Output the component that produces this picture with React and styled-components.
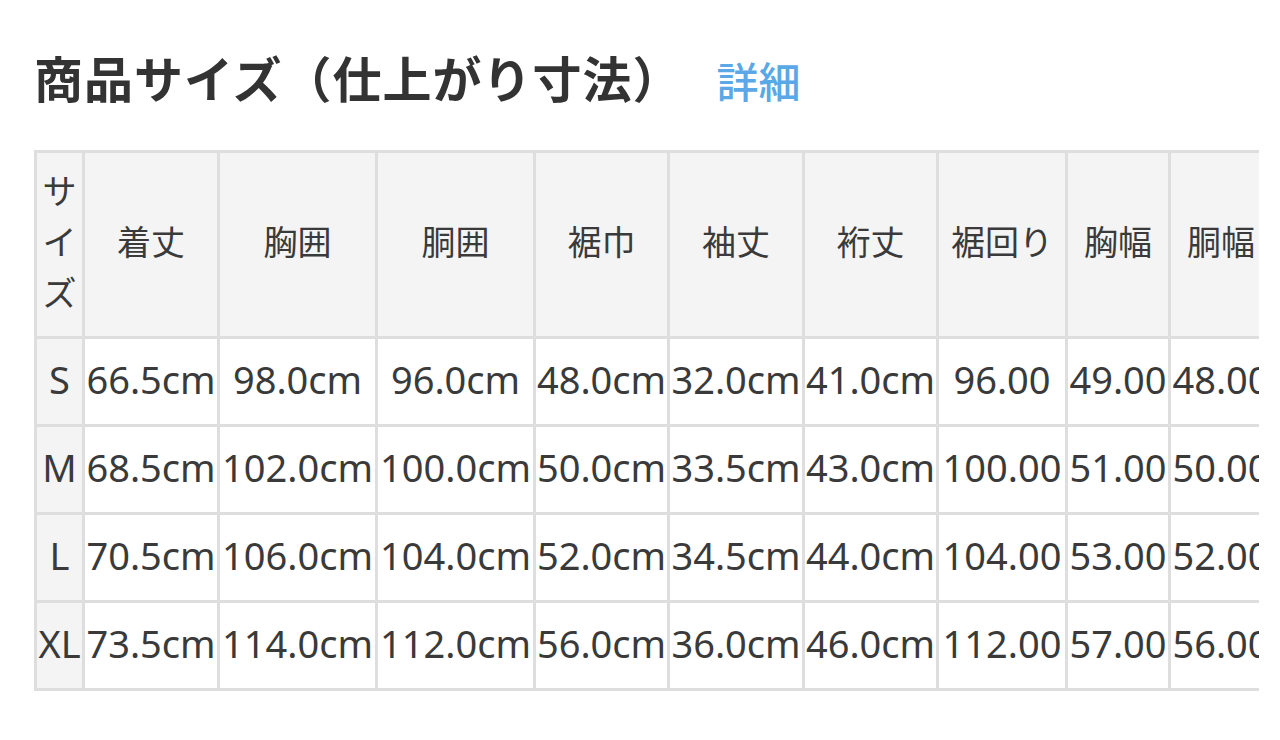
import React from "react";
import styled, { createGlobalStyle } from "styled-components";

const GlobalStyle = createGlobalStyle`
  html, body {
    margin: 0;
    padding: 0;
    background: #ffffff;
  }
  body {
    font-family: "Noto Sans CJK JP", "Noto Sans", sans-serif;
    color: #333333;
  }
`;

const Page = styled.div`
  padding: 53px 0 0 34px;
  width: 1280px;
  height: 740px;
  box-sizing: border-box;
  overflow: hidden;
`;

const TitleRow = styled.div`
  display: flex;
  align-items: baseline;
  height: 48px;
  margin-bottom: 49px;
`;

const Title = styled.h2`
  margin: 0;
  font-family: "Noto Sans CJK JP", sans-serif;
  font-weight: 700;
  font-size: 49px;
  line-height: 48px;
  letter-spacing: 1px;
  color: #333333;
  white-space: nowrap;
`;

const DetailLink = styled.a`
  margin-left: 34px;
  font-family: "Noto Sans CJK JP", sans-serif;
  font-weight: 500;
  font-size: 42px;
  line-height: 48px;
  color: #5ba8e6;
  text-decoration: none;
  cursor: pointer;
`;

const TableClip = styled.div`
  width: 1225px;
  overflow: hidden;
`;

const Grid = styled.div`
  display: inline-grid;
  grid-template-columns: ${(p) => p.$cols.map((c) => `${c}px`).join(" ")};
  grid-template-rows: 183px repeat(4, 85px);
  gap: 3px;
  padding: 3px;
  background: #dedede;
`;

const Cell = styled.div`
  display: flex;
  align-items: center;
  justify-content: center;
  text-align: center;
  background: ${(p) => (p.$shade ? "#f4f4f4" : "#ffffff")};
  color: #333333;
  min-width: 0;
`;

const HeadCell = styled(Cell)`
  padding-bottom: 8px;
  font-family: "Noto Sans CJK JP", sans-serif;
  font-size: 34px;
  line-height: 1.5;
  color: #3a3a3a;
  white-space: ${(p) => (p.$wrap ? "normal" : "nowrap")};
  word-break: break-all;
`;

const DataCell = styled(Cell)`
  padding-bottom: 5px;
  font-family: "Noto Sans", "Noto Sans CJK JP", sans-serif;
  font-size: 38px;
  line-height: 1;
  color: #3a3a3a;
  white-space: nowrap;
`;

const cols = [45, 132, 155, 155, 131, 132, 131, 126, 100, 100];

const headers = ["着丈", "胸囲", "胴囲", "裾巾", "袖丈", "裄丈", "裾回り", "胸幅", "胴幅"];

const rows = [
  ["S", "66.5cm", "98.0cm", "96.0cm", "48.0cm", "32.0cm", "41.0cm", "96.00", "49.00", "48.00"],
  ["M", "68.5cm", "102.0cm", "100.0cm", "50.0cm", "33.5cm", "43.0cm", "100.00", "51.00", "50.00"],
  ["L", "70.5cm", "106.0cm", "104.0cm", "52.0cm", "34.5cm", "44.0cm", "104.00", "53.00", "52.00"],
  ["XL", "73.5cm", "114.0cm", "112.0cm", "56.0cm", "36.0cm", "46.0cm", "112.00", "57.00", "56.00"],
];

export default function App() {
  return (
    <>
      <GlobalStyle />
      <Page>
        <TitleRow>
          <Title>商品サイズ（仕上がり寸法）</Title>
          <DetailLink>詳細</DetailLink>
        </TitleRow>
        <TableClip>
          <Grid $cols={cols}>
            <HeadCell $shade $wrap>サイズ</HeadCell>
            {headers.map((h) => (
              <HeadCell key={h} $shade>
                {h}
              </HeadCell>
            ))}
            {rows.map((r) =>
              r.map((v, i) => (
                <DataCell key={r[0] + i} $shade={i === 0}>
                  {v}
                </DataCell>
              ))
            )}
          </Grid>
        </TableClip>
      </Page>
    </>
  );
}
